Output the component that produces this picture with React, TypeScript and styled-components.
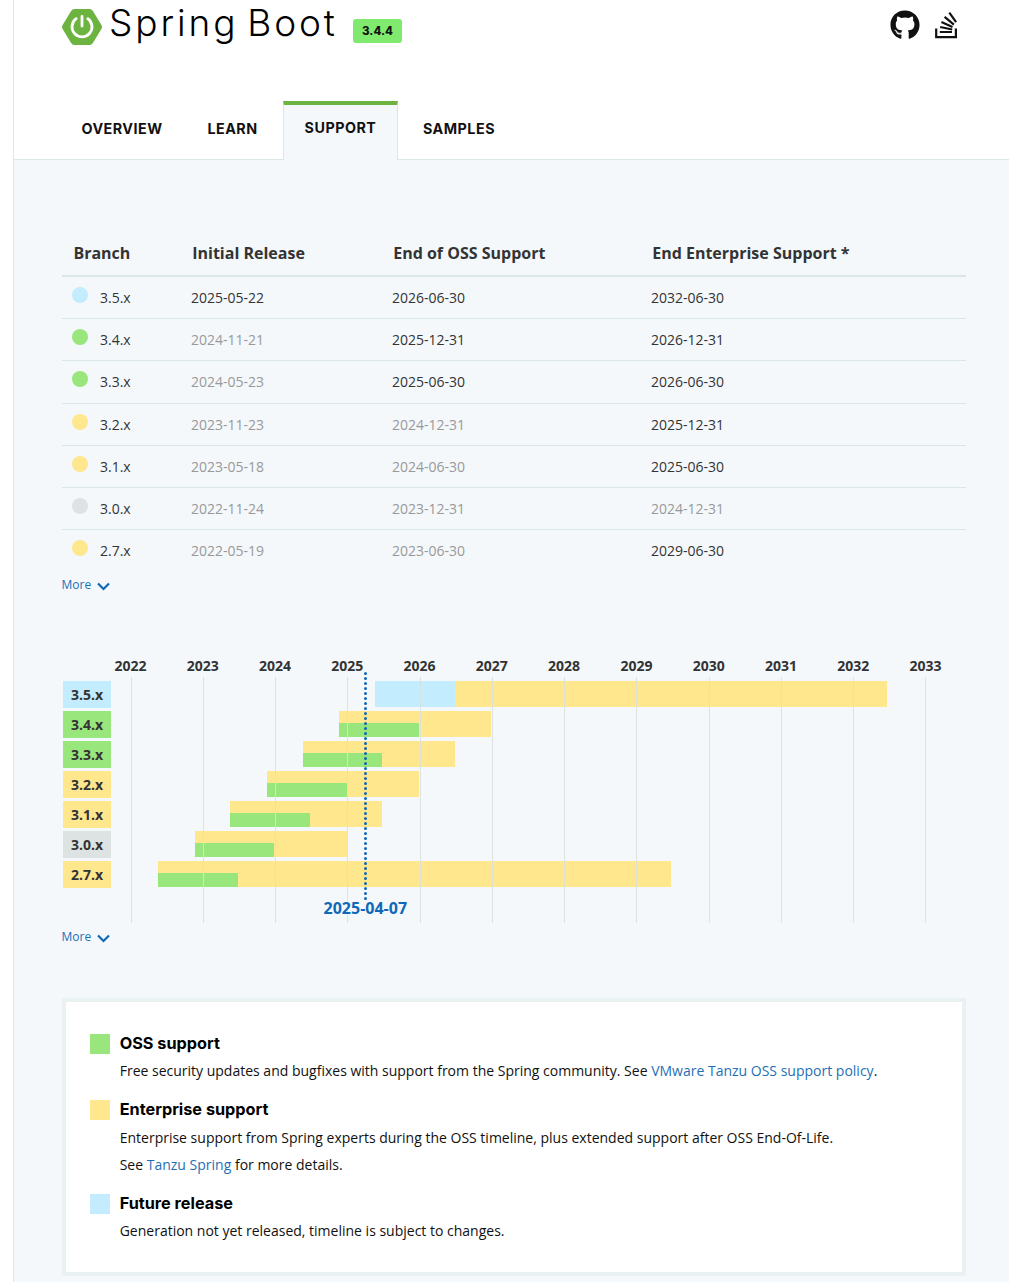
import React from "react";
import styled, { createGlobalStyle } from "styled-components";
import { FaGithub } from "react-icons/fa";

const GREEN = "#99e67d";
const YELLOW = "#ffe78e";
const BLUE = "#c3ecff";
const GREY = "#dde3e3";
const LINE = "#dbe7e7";

const GlobalStyle = createGlobalStyle`
  * { box-sizing: border-box; }
  body { margin: 0; background: #fff; font-family: "Open Sans", sans-serif; font-size: 14px; color: #333; }
  a { color: #1f6fb5; text-decoration: none; }
`;

const Page = styled.div`
  margin-left: 13px;
  height: 1282px;
  overflow: hidden;
  border-left: 1px solid ${LINE};
  background: #f4f8fb;
`;

const Header = styled.header`
  height: 160px;
  background: #fff;
  border-bottom: 1px solid ${LINE};
  display: flex;
  flex-direction: column;
  justify-content: space-between;
`;

const TitleBar = styled.div`
  display: flex;
  align-items: flex-start;
  padding: 0 50px 0 48px;
`;

const Logo = styled.svg`
  width: 40px;
  height: 36px;
  margin-top: 9px;
`;

const Title = styled.h1`
  margin: -2px 0 0 7px;
  width: 236px;
  font: 350 37px/50px Inter, sans-serif;
  letter-spacing: 2.9px;
  word-spacing: -4.5px;
  color: #000;
  white-space: nowrap;
`;

const Version = styled.span`
  margin-top: 19px;
  margin-left: 8px;
  width: 49px;
  height: 24px;
  border-radius: 3px;
  background: #80ea6e;
  color: #111;
  font: 800 11.5px/24px Inter, sans-serif;
  text-align: center;
`;

const Links = styled.div`
  margin-left: auto;
  display: flex;
  gap: 15.5px;
  color: #111;
  padding-top: 10px;
  svg { display: block; }
`;

const Tabs = styled.nav`
  display: flex;
  margin-bottom: -1px;
  padding-left: 48px;
`;

const Tab = styled.a<{ $width: number; $active?: boolean }>`
  width: ${(p) => p.$width}px;
  height: 59px;
  text-align: center;
  font: 700 14.3px/${(p) => (p.$active ? 46 : 56)}px Inter, sans-serif;
  letter-spacing: 0.5px;
  color: #111;
  ${(p) =>
    p.$active &&
    `background: #f4f8fb;
    border: 1px solid ${LINE};
    border-width: 4px 1px 0;
    border-top-color: #6db33f;`}
`;

const Content = styled.main`
  padding: 70px 43px 0 48px;
`;

const TableRow = styled.div`
  display: grid;
  grid-template-columns: 129px 201px 259px 1fr;
  height: 42.2px;
  line-height: 42px;
  border-bottom: 1px solid ${LINE};
  &:last-child { border-bottom: 0; }
`;

const HeadRow = styled(TableRow)`
  height: 47px;
  line-height: 46px;
  border-bottom-width: 2px;
  font-size: 16px;
  font-weight: 700;
  > span { padding-left: 1.2px; }
  > span:first-child { padding-left: 11.4px; }
`;

const Branch = styled.span`
  display: flex;
  padding-left: 10px;
`;

const Dot = styled.i<{ $color: string }>`
  width: 16px;
  height: 16px;
  margin: 10px 12px 0 0;
  border-radius: 50%;
  background: ${(p) => p.$color};
`;

const DateCell = styled.span<{ $past: boolean }>`
  color: ${(p) => (p.$past ? "#999" : "#333")};
`;

const More = styled.a`
  display: flex;
  align-items: center;
  gap: 5.6px;
  height: 20px;
  margin-left: -0.5px;
  font-size: 12px;
  svg { margin-top: 3px; }
`;

const TableMore = styled(More)`
  margin-top: 2.4px;
`;

const Chart = styled.section`
  position: relative;
  height: 268px;
  margin: 61px 0 3px;
`;

const Years = styled.div`
  display: grid;
  grid-template-columns: repeat(12, 72.29px);
  padding-left: 32.3px;
  height: 21px;
  line-height: 20px;
  font-weight: 700;
  text-align: center;
`;

const Plot = styled.div`
  display: flex;
`;

const Labels = styled.div`
  display: grid;
  gap: 3px;
  grid-auto-rows: 27px;
  align-content: start;
  width: 50px;
  padding: 4px 0 0 1px;
  flex: none;
`;

const Label = styled.span<{ $color: string }>`
  background: ${(p) => p.$color};
  width: 48px;
  font-weight: 700;
  line-height: 27px;
  text-align: center;
`;

const Bars = styled.svg`
  display: block;
  flex: none;
  margin-left: -50px;
  margin-top: -5px;
`;

const Today = styled.strong`
  position: absolute;
  left: 253.3px;
  top: 241px;
  width: 100px;
  text-align: center;
  font-size: 16px;
  line-height: 22px;
  font-weight: 700;
  color: #0f68b8;
`;

const Legend = styled.section`
  margin-top: 51px;
  width: 904px;
  height: 278px;
  border: 4px solid #e9f1f1;
  background: #fff;
  padding: 28px 24px;
  color: #111;
`;

const LegendItem = styled.div`
  display: grid;
  grid-template-columns: 20px 1fr;
  column-gap: 9.7px;
  margin-bottom: 12px;
`;

const Swatch = styled.i<{ $color: string }>`
  width: 20px;
  height: 20px;
  margin-top: 4px;
  background: ${(p) => p.$color};
`;

const LegendTitle = styled.h3`
  margin: 0;
  font: 700 16.25px/27px Inter, sans-serif;
  color: #000;
`;

const LegendText = styled.p<{ $gap?: number }>`
  grid-column: 2;
  margin: ${(p) => p.$gap ?? 0}px 0 0;
  line-height: 27px;
  font-size: 14px;
`;

type Cell = [string, boolean];
interface Generation {
  name: string;
  color: string;
  dates: [Cell, Cell, Cell];
  bar: [number, number, number];
}

/* bar: start of release, end of OSS support, end of enterprise support, on the plot's x axis */
const generations: Generation[] = [
  { name: "3.5.x", color: BLUE, dates: [["2025-05-22", false], ["2026-06-30", false], ["2032-06-30", false]], bar: [313, 393, 825] },
  { name: "3.4.x", color: GREEN, dates: [["2024-11-21", true], ["2025-12-31", false], ["2026-12-31", false]], bar: [277, 357, 429] },
  { name: "3.3.x", color: GREEN, dates: [["2024-05-23", true], ["2025-06-30", false], ["2026-06-30", false]], bar: [241, 320, 393] },
  { name: "3.2.x", color: YELLOW, dates: [["2023-11-23", true], ["2024-12-31", true], ["2025-12-31", false]], bar: [205, 285, 357] },
  { name: "3.1.x", color: YELLOW, dates: [["2023-05-18", true], ["2024-06-30", true], ["2025-06-30", false]], bar: [168, 248, 320] },
  { name: "3.0.x", color: GREY, dates: [["2022-11-24", true], ["2023-12-31", true], ["2024-12-31", true]], bar: [133, 212, 285] },
  { name: "2.7.x", color: YELLOW, dates: [["2022-05-19", true], ["2023-06-30", true], ["2029-06-30", false]], bar: [96, 176, 609] },
];

const years = Array.from({ length: 12 }, (_, i) => 2022 + i);

const Chevron = () => (
  <svg width="13" height="9" viewBox="0 0 13 9" fill="none" stroke="#0f68b8" strokeWidth="2.2">
    <path d="M1 1.5 6.5 7 12 1.5" />
  </svg>
);

const StackOverflow = () => (
  <svg width="24" height="30" viewBox="0 0 24 30" fill="none" stroke="#111" strokeWidth="2.2">
    <path d="M1.2 18.5V27.2H20.9V18.5" />
    <path d="M4.8 22H17M5.2 17 17.2 19.5M6.4 11.9 17.5 17.1M9.6 6.9 18.9 14.7M14.3 2.6 21.1 12.2" />
  </svg>
);

export default function App() {
  return (
    <Page>
      <GlobalStyle />
      <Header>
        <TitleBar>
          <Logo viewBox="0 0 40 36">
            <path
              d="M12.5 0h15a4 4 0 0 1 3.4 2L39.4 16a4 4 0 0 1 0 4L30.9 34a4 4 0 0 1-3.4 2h-15a4 4 0 0 1-3.4-2L.6 20a4 4 0 0 1 0-4L9.1 2A4 4 0 0 1 12.5 0Z"
              fill="#6db33f"
            />
            <path d="M14.2 9.7a10 10 0 1 0 11.6 0M20 7.3v9.7" fill="none" stroke="#fff" strokeWidth="2.8" strokeLinecap="round" />
          </Logo>
          <Title>Spring Boot</Title>
          <Version>3.4.4</Version>
          <Links>
            <FaGithub size={30} />
            <StackOverflow />
          </Links>
        </TitleBar>
        <Tabs>
          <Tab $width={120}>OVERVIEW</Tab>
          <Tab $width={101}>LEARN</Tab>
          <Tab $width={115} $active>SUPPORT</Tab>
          <Tab $width={122}>SAMPLES</Tab>
        </Tabs>
      </Header>
      <Content>
        <div>
          <HeadRow>
            <span>Branch</span>
            <span>Initial Release</span>
            <span>End of OSS Support</span>
            <span>End Enterprise Support *</span>
          </HeadRow>
          {generations.map((g) => (
            <TableRow key={g.name}>
              <Branch>
                <Dot $color={g.color} />
                {g.name}
              </Branch>
              {g.dates.map(([date, past], i) => (
                <DateCell key={i} $past={past}>{date}</DateCell>
              ))}
            </TableRow>
          ))}
        </div>
        <TableMore>More<Chevron /></TableMore>
        <Chart>
          <Years>
            {years.map((y) => <span key={y}>{y}</span>)}
          </Years>
          <Plot>
            <Labels>
              {generations.map((g) => <Label key={g.name} $color={g.color}>{g.name}</Label>)}
            </Labels>
            <Bars width="904" height="252" viewBox="0 0 904 252" shapeRendering="crispEdges">
              {generations.map((g, i) => {
                const [start, oss, end] = g.bar;
                const y = 9 + i * 30;
                const future = g.color === BLUE;
                return (
                  <g key={g.name}>
                    <rect x={start} y={y} width={end - start} height="26" fill={YELLOW} />
                    <rect x={start} y={future ? y : y + 12} width={oss - start} height={future ? 26 : 14} fill={future ? BLUE : GREEN} />
                  </g>
                );
              })}
              {years.map((y, i) => (
                <rect key={y} x={Math.round(68.8 + i * 72.22)} y="5" width="1" height="246" fill="#d9e0e0" fillOpacity="0.9" />
              ))}
              <path d="M303.5 1.5V230" stroke="#0f68b8" strokeWidth="3" strokeLinecap="round" strokeDasharray="0 5" shapeRendering="auto" />
            </Bars>
          </Plot>
          <Today>2025-04-07</Today>
        </Chart>
        <More>More<Chevron /></More>
        <Legend>
          <LegendItem>
            <Swatch $color={GREEN} />
            <LegendTitle>OSS support</LegendTitle>
            <LegendText>
              Free security updates and bugfixes with support from the Spring community. See <a>VMware Tanzu OSS support policy</a>.
            </LegendText>
          </LegendItem>
          <LegendItem>
            <Swatch $color={YELLOW} />
            <LegendTitle>Enterprise support</LegendTitle>
            <LegendText $gap={1}>
              Enterprise support from Spring experts during the OSS timeline, plus extended support after OSS End-Of-Life.
              <br />
              See <a>Tanzu Spring</a> for more details.
            </LegendText>
          </LegendItem>
          <LegendItem>
            <Swatch $color={BLUE} />
            <LegendTitle>Future release</LegendTitle>
            <LegendText>Generation not yet released, timeline is subject to changes.</LegendText>
          </LegendItem>
        </Legend>
      </Content>
    </Page>
  );
}
